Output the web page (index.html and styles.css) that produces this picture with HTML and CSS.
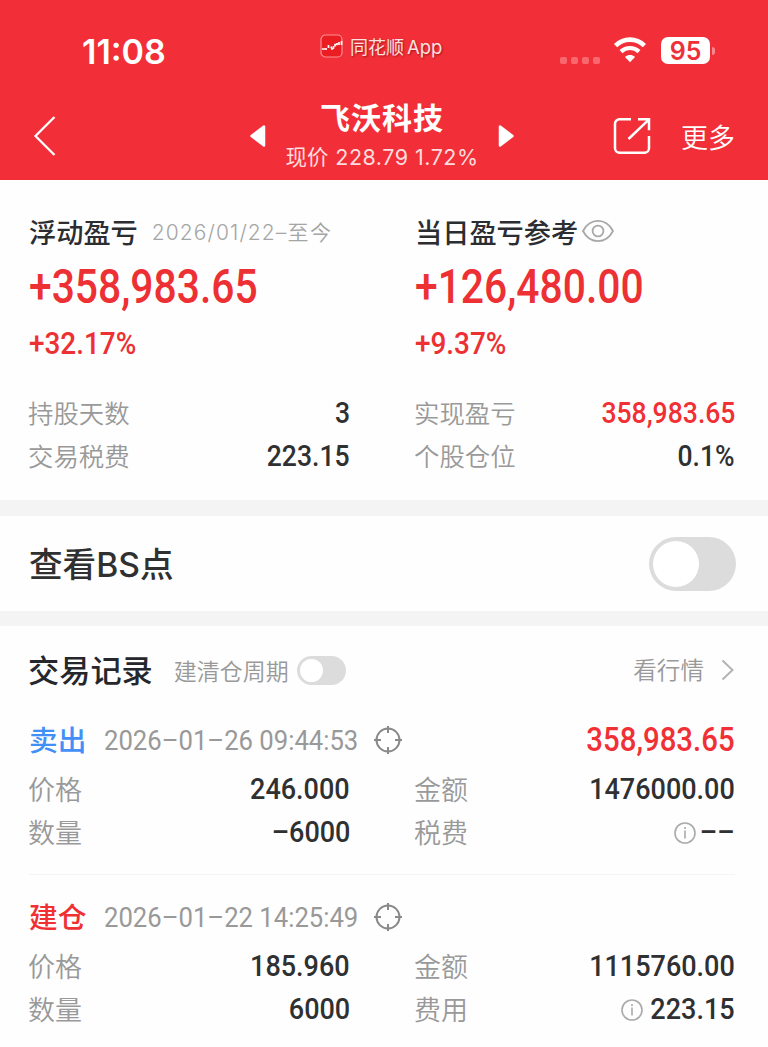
FILE: index.html
```html
<!DOCTYPE html>
<html lang="zh-CN">
<head>
    <meta charset="UTF-8">
    <meta name="viewport" content="width=device-width, initial-scale=1.0">
    <title>飞沃科技</title>
    <link rel="stylesheet" href="styles.css">
</head>
<body>
    <header class="header">
        <div class="status-bar">
            <span class="time">11:08</span>
            <div class="app-tag">
                <svg width="24" height="24" viewBox="0 0 24 24">
                    <rect x="1" y="1" width="21" height="22" rx="4.5" fill="#e91d22" stroke="#fa9193" stroke-width="1.2"/>
                    <path d="M2 15h3M6 16v-2M8.500 14v-3M11 12.500l1 2.500 1.500-1v-2M15 12.500v-2h2V9M19 11V8M21.500 7v4" fill="none" stroke="#fff" stroke-width="1.700"/>
                </svg>
                <span>同花顺<span class="app-latin">App</span></span>
            </div>
            <div class="status-icons">
                <div class="signal"><i></i><i></i><i></i><i></i></div>
                <svg class="wifi" width="34" height="26" viewBox="0 0 34 26">
                    <path d="M2.6 8.6C10.8 .6 23.2 .6 31.400 8.600" fill="none" stroke="#fff" stroke-width="4.600"/>
                    <path d="M8 14.600c5.200-4.800 12.800-4.800 18 0" fill="none" stroke="#fff" stroke-width="4.200"/>
                    <path d="M12 20c2.800-2.600 7.200-2.600 10 0l-5 5.300z" fill="#fff"/>
                </svg>
                <span class="battery">95</span>
                <i class="battery-tip"></i>
            </div>
        </div>
        <nav class="nav">
            <svg class="back" width="24" height="42" viewBox="0 0 24 42">
                <path d="M21.500 2L2.500 21l19 19" fill="none" stroke="#fff" stroke-width="2.300"/>
            </svg>
            <svg class="prev" width="18" height="24" viewBox="0 0 18 24">
                <path d="M15 2.500v19L2.500 12z" fill="#fff" stroke="#fff" stroke-width="2.500" stroke-linejoin="round"/>
            </svg>
            <div class="stock">
                <h1>飞沃科技</h1>
                <p>现价 <span class="quote">228.79 1.72%</span></p>
            </div>
            <svg class="next" width="18" height="24" viewBox="0 0 18 24">
                <path d="M3 2.500v19L15.500 12z" fill="#fff" stroke="#fff" stroke-width="2.500" stroke-linejoin="round"/>
            </svg>
            <svg class="share" width="38" height="38" viewBox="0 0 38 38">
                <path d="M18 2.200H6.500a4.500 4.500 0 0 0-4.500 4.500v24.500a4.500 4.500 0 0 0 4.500 4.500h25a4.500 4.500 0 0 0 4.500-4.500V19M25 2.200h11v11M35.500 2.800L15.500 22" fill="none" stroke="#fff" stroke-width="2.500"/>
            </svg>
            <span class="more">更多</span>
        </nav>
    </header>

    <section class="summary">
        <div class="grid">
            <div>
                <div class="sum-title">浮动盈亏<span class="range">2026/01/22–<span class="now">至今</span></span></div>
                <div class="sum-total num">+358,983.65</div>
                <div class="sum-rate num">+32.17%</div>
            </div>
            <div>
                <div class="sum-title">当日盈亏参考
                    <svg class="eye" width="32" height="24" viewBox="0 0 32 24">
                        <path d="M1 12C8-1.500 24-1.500 31 12 24 25.500 8 25.500 1 12z" fill="none" stroke="#a8a8a8" stroke-width="1.800"/>
                        <circle cx="16" cy="12" r="5.400" fill="none" stroke="#a8a8a8" stroke-width="1.800"/>
                    </svg>
                </div>
                <div class="sum-total num">+126,480.00</div>
                <div class="sum-rate num">+9.37%</div>
            </div>
        </div>
        <div class="grid stats">
            <div class="row"><span>持股天数</span><b class="num">3</b></div>
            <div class="row"><span>实现盈亏</span><b class="num red">358,983.65</b></div>
            <div class="row"><span>交易税费</span><b class="num">223.15</b></div>
            <div class="row"><span>个股仓位</span><b class="num">0.1%</b></div>
        </div>
    </section>

    <section class="bs-point">
        <span class="bs-label">查看<span class="bs">BS</span>点</span>
        <div class="switch"></div>
    </section>

    <section class="records">
        <div class="records-head">
            <h2>交易记录</h2>
            <span class="cycle">建清仓周期</span>
            <div class="switch small"></div>
            <span class="market">看行情</span>
            <svg width="14" height="22" viewBox="0 0 14 22">
                <path d="M1.500 1.500L11.500 11 1.500 20.500" fill="none" stroke="#b4b4b4" stroke-width="2"/>
            </svg>
        </div>

        <div class="trade">
            <div class="trade-head">
                <span class="tag sell">卖出</span>
                <span class="date num">2026–01–26 09:44:53</span>
                <svg class="target" width="28" height="28" viewBox="0 0 28 28">
                    <circle cx="14" cy="14" r="11.500"/>
                    <path d="M14 0v7M14 21v7M0 14h7M21 14h7"/>
                </svg>
                <b class="profit num">358,983.65</b>
            </div>
            <div class="grid">
                <div class="row"><span>价格</span><b class="num">246.000</b></div>
                <div class="row"><span>金额</span><b class="num">1476000.00</b></div>
                <div class="row"><span>数量</span><b class="num">–6000</b></div>
                <div class="row"><span>税费</span>
                    <svg class="info" width="22" height="22" viewBox="0 0 22 22">
                        <circle cx="11" cy="11" r="10"/>
                        <path d="M11 8.500v8M11 5v2"/>
                    </svg>
                    <b class="num dashes">––</b>
                </div>
            </div>
        </div>

        <div class="trade">
            <div class="trade-head">
                <span class="tag open">建仓</span>
                <span class="date num">2026–01–22 14:25:49</span>
                <svg class="target" width="28" height="28" viewBox="0 0 28 28">
                    <circle cx="14" cy="14" r="11.500"/>
                    <path d="M14 0v7M14 21v7M0 14h7M21 14h7"/>
                </svg>
            </div>
            <div class="grid">
                <div class="row"><span>价格</span><b class="num">185.960</b></div>
                <div class="row"><span>金额</span><b class="num">1115760.00</b></div>
                <div class="row"><span>数量</span><b class="num">6000</b></div>
                <div class="row"><span>费用</span>
                    <svg class="info" width="22" height="22" viewBox="0 0 22 22">
                        <circle cx="11" cy="11" r="10"/>
                        <path d="M11 8.500v8M11 5v2"/>
                    </svg>
                    <b class="num">223.15</b>
                </div>
            </div>
        </div>
    </section>
</body>
</html>
```
FILE: styles.css
```css
* {
    box-sizing: border-box;
}
body {
    margin: 0;
    width: 768px;
    height: 1047px;
    overflow: hidden;
    background: #fefefe;
    color: #2b2d31;
    font-family: "Noto Sans CJK SC", sans-serif;
    white-space: nowrap;
}
h1, h2, p {
    margin: 0;
}
svg {
    display: block;
    flex: none;
}
.num {
    font-family: Roboto, "Noto Sans CJK SC", sans-serif;
    font-weight: 500;
}
.red {
    color: #f03034;
}

/* header */
.header {
    height: 180px;
    background: #f22f38;
    color: #fff;
}
.status-bar {
    height: 92px;
    padding: 0 53px 0 82px;
    display: flex;
    align-items: flex-start;
}
.time {
    width: 238px;
    padding-top: 32px;
    font: 600 34px/40px Inter, sans-serif;
}
.app-tag {
    display: flex;
    gap: 6px;
    padding-top: 34px;
    font-size: 18px;
    line-height: 24px;
    color: #fde0e0;
    text-shadow: 1px 1px 2px rgba(110, 0, 0, 0.6);
}
.app-latin {
    margin-left: 3px;
    font-family: Inter, sans-serif;
    font-size: 18.500px;
}
.status-icons {
    margin-left: auto;
    padding-top: 37px;
    display: flex;
}
.signal {
    display: flex;
    gap: 4px;
    padding-top: 20px;
    margin-right: 13px;
}
.signal i {
    width: 7px;
    height: 7px;
    border-radius: 2px;
    background: #f8686e;
}
.battery {
    width: 49px;
    height: 27px;
    margin-left: 14px;
    border-radius: 7px;
    background: #fff;
    color: #ee3038;
    text-align: center;
    font: 600 25px/28px Inter, sans-serif;
}
.battery-tip {
    width: 3px;
    height: 8px;
    margin: 10px 0 0 2px;
    border-radius: 0 3px 3px 0;
    background: #f8888d;
}
.nav {
    height: 88px;
    padding: 0 33px;
    display: flex;
    align-items: center;
}
.prev {
    margin-left: 192px;
}
.stock {
    width: 230px;
    height: 88px;
    text-align: center;
}
.stock h1 {
    padding-top: 4px;
    font-size: 30px;
    line-height: 40px;
    letter-spacing: 1px;
}
.stock p {
    font-size: 21.500px;
    line-height: 40px;
    color: #fddcdd;
}
.quote {
    margin-left: 2px;
    font-family: Inter, sans-serif;
    letter-spacing: 0.5px;
}
.share {
    margin-left: 98px;
}
.more {
    margin-left: auto;
    font-size: 27px;
    font-weight: 350;
}

/* two column layout */
.grid {
    display: grid;
    grid-template-columns: 321px 320px;
    column-gap: 65px;
}
.row {
    height: 43px;
    display: flex;
    align-items: center;
    color: #999;
    font-size: 25.400px;
    font-weight: 350;
}
.row span {
    margin: -2px 0 0 -1px;
}
.row b {
    margin-left: auto;
    color: #2f3032;
    font-size: 30px;
    transform: scaleX(0.9);
    transform-origin: right;
}
.row b.red {
    color: #f03034;
}
.stats b {
    transform: scaleX(0.885);
}

/* summary */
.summary {
    height: 320px;
    padding: 31px 33px 0 29px;
}
.sum-title {
    height: 40px;
    display: flex;
    align-items: center;
    font-size: 27.200px;
    font-weight: 500;
}
.range {
    margin-left: 14px;
    color: #a5a5a5;
    font-family: Inter, "Noto Sans CJK SC", sans-serif;
    font-size: 21px;
    font-weight: 300;
    letter-spacing: 1.100px;
}
.now {
    font-weight: 350;
    letter-spacing: 1.500px;
}
.eye {
    margin-left: 4px;
}
.sum-total {
    height: 70px;
    padding-top: 1px;
    color: #ec3034;
    font-size: 48px;
    line-height: 70px;
    transform: scaleX(0.85);
    transform-origin: left;
}
.sum-rate {
    height: 42px;
    padding-top: 2px;
    color: #ec3034;
    font-size: 31px;
    line-height: 42px;
    transform: scaleX(0.9);
    transform-origin: left;
}
.stats {
    margin-top: 28px;
}

/* BS switch */
.bs-point {
    height: 126px;
    padding: 0 32px 0 29px;
    border-top: 16px solid #f4f4f4;
    border-bottom: 15px solid #f4f4f4;
    display: flex;
    align-items: center;
    justify-content: space-between;
    color: #303030;
    font-size: 33.600px;
    font-weight: 500;
}
.bs-label {
    margin-top: -3px;
}
.bs {
    font-family: Inter, sans-serif;
}
.switch {
    width: 87px;
    height: 54px;
    padding: 4px;
    border-radius: 27px;
    background: #dcdcdc;
}
.switch::before {
    content: "";
    display: block;
    width: 46px;
    height: 46px;
    border-radius: 50%;
    background: #fff;
}
.switch.small {
    width: 49px;
    height: 29px;
    padding: 3px;
    margin: 1px 0 0 8px;
}
.switch.small::before {
    width: 23px;
    height: 23px;
}

/* trade records */
.records {
    padding: 20px 33px 0 29px;
}
.records-head {
    height: 48px;
    margin-bottom: 18px;
    display: flex;
    align-items: center;
    color: #999;
}
.records-head h2 {
    margin: -4px 0 0 -1px;
    color: #25272c;
    font-size: 31.200px;
    font-weight: 500;
}
.cycle {
    margin-left: 21px;
    font-size: 23px;
    font-weight: 350;
}
.market {
    margin: -3px 17px 0 auto;
    font-size: 23.600px;
    font-weight: 350;
}
.trade .row {
    font-size: 27px;
}
.trade + .trade {
    margin-top: 20px;
    padding-top: 14px;
    border-top: 1px solid #f4f4f4;
}
.trade-head {
    height: 56px;
    display: flex;
    align-items: center;
}
.tag {
    width: 75px;
    margin-top: -4px;
    font-size: 28.700px;
    font-weight: 500;
}
.sell {
    color: #4290f5;
}
.open {
    color: #f03034;
}
.date {
    width: 270px;
    color: #999;
    font-size: 28.500px;
    font-weight: 400;
    transform: scaleX(0.9);
    transform-origin: left;
}
.target {
    fill: none;
    stroke: #8a8a8a;
    stroke-width: 2;
}
.profit {
    margin-left: auto;
    margin-top: -2px;
    color: #f03034;
    font-size: 33px;
    transform: scaleX(0.89);
    transform-origin: right;
}
.trade .row b {
    margin-top: -2px;
}
.info {
    margin-left: auto;
    margin-right: -2px;
    fill: none;
    stroke: #aaa;
    stroke-width: 1.600;
}
.info + b {
    margin-left: 0;
}
.info + .dashes {
    margin-left: 2px;
}
```
